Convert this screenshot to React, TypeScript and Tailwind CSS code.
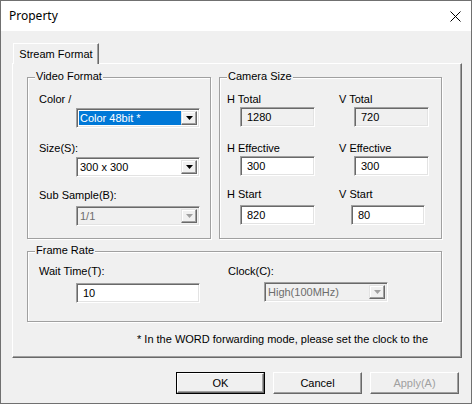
import React from 'react';

const font = { fontFamily: '"Liberation Sans", Arial, sans-serif' };

function Sunken({ className, children }: { className: string; children?: React.ReactNode }) {
  return (
    <div
      className={`border border-t-[#a0a0a0] border-l-[#a0a0a0] border-r-white border-b-white shadow-[inset_1px_1px_0_#696969,inset_-1px_-1px_0_#e3e3e3] ${className}`}
    >
      {children}
    </div>
  );
}

function Arrow({ disabled }: { disabled?: boolean }) {
  return (
    <div className="w-[16px] h-full border border-t-[#e3e3e3] border-l-[#e3e3e3] border-r-[#696969] border-b-[#696969] shadow-[inset_-1px_-1px_0_#a0a0a0,inset_1px_1px_0_#ffffff] bg-[#f0f0f0] flex items-center justify-center">
      <svg width="7" height="4" viewBox="0 0 7 4">
        <path d="M0 0h7L3.5 4z" fill={disabled ? '#a0a0a0' : '#000'} />
      </svg>
    </div>
  );
}

function Combo({ value, selected, disabled }: { value: string; selected?: boolean; disabled?: boolean }) {
  return (
    <Sunken className={`w-[124px] h-[20px] flex p-[2px] ${disabled ? 'bg-[#f0f0f0]' : 'bg-white'}`}>
      <div
        className={`flex-1 flex items-center pl-[1px] text-[11px] leading-[13px] ${
          selected ? 'bg-[#0078d7] text-white' : disabled ? 'text-[#6d6d6d]' : 'text-black'
        }`}
      >
        {value}
      </div>
      <Arrow disabled={disabled} />
    </Sunken>
  );
}

function Edit({ value, readOnly, w = 'w-[75px]' }: { value: string; readOnly?: boolean; w?: string }) {
  return (
    <Sunken className={`${w} h-[20px] flex items-center pl-[6px] text-[11px] leading-[13px] ${readOnly ? 'bg-[#f0f0f0]' : 'bg-white'}`}>
      {value}
    </Sunken>
  );
}

function Group({ title, className, children }: { title: string; className: string; children: React.ReactNode }) {
  return (
    <div
      className={`relative border border-[#a0a0a0] shadow-[inset_1px_1px_0_#ffffff,1px_1px_0_#ffffff] ${className}`}
    >
      <span className="absolute -top-[8px] left-[7px] px-[1px] bg-[#f0f0f0] text-[11px] leading-[13px]">{title}</span>
      {children}
    </div>
  );
}

function Label({ children, className = '' }: { children: React.ReactNode; className?: string }) {
  return <div className={`h-[13px] text-[11px] leading-[13px] ${className}`}>{children}</div>;
}

function Button({ label, isDefault, disabled }: { label: string; isDefault?: boolean; disabled?: boolean }) {
  return (
    <div
      className={`w-[89px] h-[22px] flex ${isDefault ? 'border border-[#000]' : ''}`}
    >
      <div
        className={`flex-1 flex items-center justify-center border border-t-white border-l-white border-r-[#696969] border-b-[#696969] shadow-[inset_-1px_-1px_0_#a0a0a0] bg-[#f0f0f0] text-[11px] leading-[13px] ${
          disabled ? 'text-[#a0a0a0]' : 'text-black'
        }`}
      >
        {label}
      </div>
    </div>
  );
}

export default function App() {
  return (
    <div style={font} className="w-[472px] h-[404px] flex flex-col border border-[#707070] bg-[#f0f0f0] text-black">
      {/* title bar */}
      <div className="h-[30px] bg-white flex items-center justify-between pl-[8px] pr-[10px]">
        <span style={{ fontFamily: '"Noto Sans", "Liberation Sans", sans-serif' }} className="text-[12px] leading-[16px]">
          Property
        </span>
        <svg width="11" height="11" viewBox="0 0 11 11">
          <path d="M0.5 0.5l10 10M10.5 0.5l-10 10" stroke="#000" strokeWidth="1" />
        </svg>
      </div>

      <div className="flex-1 pl-[11px] pt-[12px] pr-[10px]">
        {/* tab */}
        <div className="relative z-10 ml-[1px] -mb-px w-[86px] h-[21px] border-l border-t border-white border-r border-r-[#696969] shadow-[inset_-1px_0_0_#a0a0a0] bg-[#f0f0f0] flex items-center justify-center text-[11px] leading-[13px]">
          Stream Format
        </div>

        {/* panel */}
        <div className="w-[450px] h-[295px] border-l border-t border-white border-r border-b border-r-[#696969] border-b-[#696969] shadow-[inset_-1px_-1px_0_#a0a0a0] pl-[14px] pt-[13px]">
          <div className="flex gap-[8px]">
            <Group title="Video Format" className="w-[184px] h-[162px] pl-[11px]">
              <Label className="mt-[15px]">Color /</Label>
              <div className="mt-[2px] ml-[37px]">
                <Combo value="Color 48bit *" selected />
              </div>
              <Label className="mt-[14px]">Size(S):</Label>
              <div className="mt-[2px] ml-[37px]">
                <Combo value="300 x 300" />
              </div>
              <Label className="mt-[12px]">Sub Sample(B):</Label>
              <div className="mt-[4px] ml-[37px]">
                <Combo value="1/1" disabled />
              </div>
            </Group>

            <Group title="Camera Size" className="w-[223px] h-[162px] pl-[7px]">
              <div className="grid grid-cols-[112px_1fr]">
                <div>
                  <Label className="mt-[15px]">H Total</Label>
                  <div className="mt-[1px] ml-[13px]"><Edit value="1280" readOnly /></div>
                  <Label className="mt-[15px]">H Effective</Label>
                  <div className="mt-[1px] ml-[13px]"><Edit value="300" /></div>
                  <Label className="mt-[12px]">H Start</Label>
                  <div className="mt-[4px] ml-[13px]"><Edit value="820" /></div>
                </div>
                <div>
                  <Label className="mt-[15px]">V Total</Label>
                  <div className="mt-[1px] ml-[15px]"><Edit value="720" readOnly /></div>
                  <Label className="mt-[15px]">V Effective</Label>
                  <div className="mt-[1px] ml-[15px]"><Edit value="300" /></div>
                  <Label className="mt-[12px]">V Start</Label>
                  <div className="mt-[4px] ml-[12px]"><Edit value="80" w="w-[74px]" /></div>
                </div>
              </div>
            </Group>
          </div>

          <Group title="Frame Rate" className="mt-[12px] w-[415px] h-[71px] pl-[11px]">
            <div className="flex">
              <div className="w-[189px]">
                <Label className="mt-[13px]">Wait Time(T):</Label>
                <div className="mt-[5px] ml-[37px]">
                  <Edit value="10" w="w-[124px]" />
                </div>
              </div>
              <div>
                <Label className="mt-[13px]">Clock(C):</Label>
                <div className="mt-[4px] ml-[36px]">
                  <Combo value="High(100MHz)" disabled />
                </div>
              </div>
            </div>
          </Group>

          <div className="mt-[11px] ml-[110px] text-[11px] leading-[13px] whitespace-nowrap">
            * In the WORD forwarding mode, please set the clock to the
          </div>
        </div>

        {/* buttons */}
        <div className="mt-[14px] ml-[164px] flex gap-[8px]">
          <Button label="OK" isDefault />
          <Button label="Cancel" />
          <Button label="Apply(A)" disabled />
        </div>
      </div>
    </div>
  );
}
